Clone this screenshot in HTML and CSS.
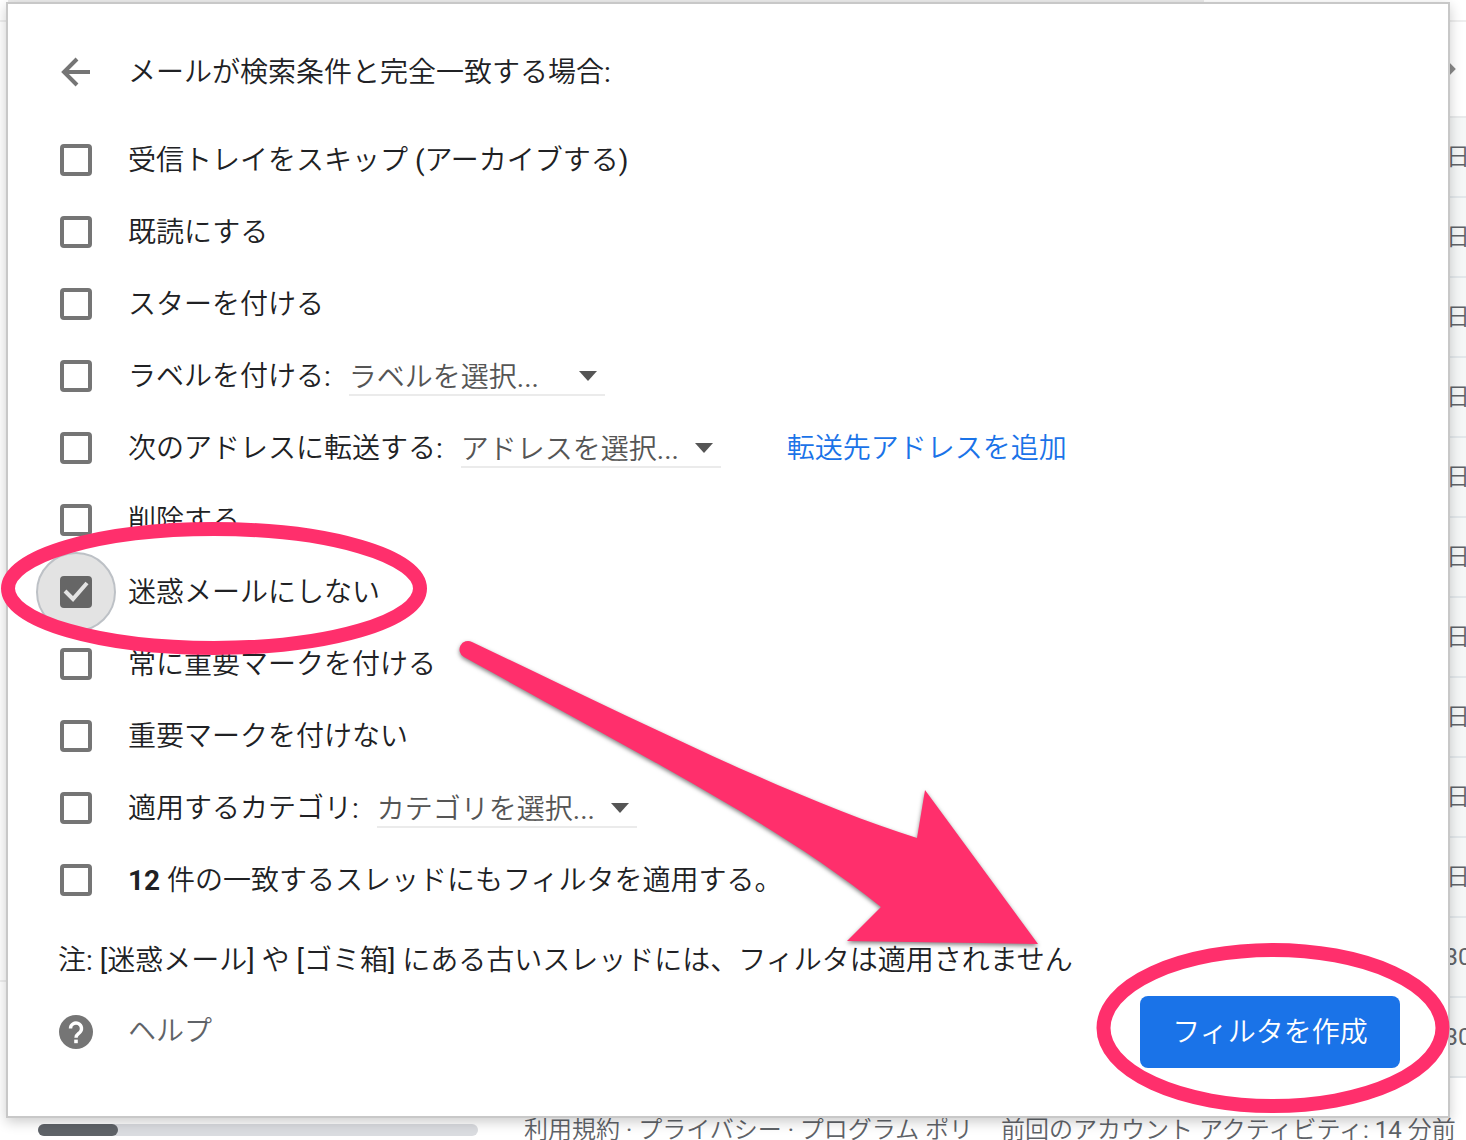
FILE: index.html
```html
<!DOCTYPE html>
<html lang="ja">
<head>
<meta charset="utf-8">
<title>フィルタを作成</title>
<link rel="stylesheet" href="styles.css">
</head>
<body>
<div class="page">
  <div class="search-edge"><div class="search-box"></div></div>
  <div class="toolbar">
    <svg class="chevron" viewBox="0 0 24 24" aria-hidden="true"><path d="M7 6l6 6-6 6" fill="none" stroke="#8a8a8a" stroke-width="4"/></svg>
  </div>
  <div class="mailbox">
    <div class="gutter"></div>
    <ul class="dates">
      <li>日</li><li>日</li><li>日</li><li>日</li><li>日</li><li>日</li>
      <li>日</li><li>日</li><li>日</li><li>日</li><li>30</li><li>30</li>
    </ul>
  </div>
  <footer class="footer">
    <div class="storage"><div class="storage-used"></div></div>
    <p class="policies">利用規約 · プライバシー · プログラム ポリ</p>
    <p class="activity">前回のアカウント アクティビティ: 14 分前</p>
  </footer>

  <form class="dialog">
    <header class="row head">
      <button class="icon-button" type="button" aria-label="戻る">
        <svg viewBox="0 0 32 32" aria-hidden="true"><path d="M30 16H5M17 3 4 16l13 13" fill="none" stroke="#757575" stroke-width="4"/></svg>
      </button>
      <h1>メールが検索条件と完全一致する場合:</h1>
    </header>
    <div class="options">
      <div class="row"><span class="tick"><input type="checkbox" id="skip"></span><label for="skip">受信トレイをスキップ (アーカイブする)</label></div>
      <div class="row"><span class="tick"><input type="checkbox" id="read"></span><label for="read">既読にする</label></div>
      <div class="row"><span class="tick"><input type="checkbox" id="star"></span><label for="star">スターを付ける</label></div>
      <div class="row"><span class="tick"><input type="checkbox" id="label"></span><label for="label">ラベルを付ける:</label>
        <span class="pick pick-narrow"><select aria-label="ラベル"><option>ラベルを選択...</option></select><svg viewBox="0 0 18 10" aria-hidden="true"><path d="M0 0h18L9 10z"/></svg></span></div>
      <div class="row"><span class="tick"><input type="checkbox" id="forward"></span><label for="forward">次のアドレスに転送する:</label>
        <span class="pick"><select aria-label="転送先アドレス"><option>アドレスを選択...</option></select><svg viewBox="0 0 18 10" aria-hidden="true"><path d="M0 0h18L9 10z"/></svg></span>
        <a class="add" href="#forwarding">転送先アドレスを追加</a></div>
      <div class="row"><span class="tick"><input type="checkbox" id="delete"></span><label for="delete">削除する</label></div>
      <div class="row"><span class="tick focused"><input type="checkbox" id="nospam" checked><svg viewBox="0 0 32 32" aria-hidden="true"><path d="M5 15l8 8L27 7" fill="none" stroke="#e3e3e3" stroke-width="4"/></svg></span><label for="nospam">迷惑メールにしない</label></div>
      <div class="row"><span class="tick"><input type="checkbox" id="important"></span><label for="important">常に重要マークを付ける</label></div>
      <div class="row"><span class="tick"><input type="checkbox" id="unimportant"></span><label for="unimportant">重要マークを付けない</label></div>
      <div class="row"><span class="tick"><input type="checkbox" id="category"></span><label for="category">適用するカテゴリ:</label>
        <span class="pick"><select aria-label="カテゴリ"><option>カテゴリを選択...</option></select><svg viewBox="0 0 18 10" aria-hidden="true"><path d="M0 0h18L9 10z"/></svg></span></div>
      <div class="row"><span class="tick"><input type="checkbox" id="apply"></span><label for="apply"><b>12</b> 件の一致するスレッドにもフィルタを適用する。</label></div>
    </div>
    <p class="note">注: [迷惑メール] や [ゴミ箱] にある古いスレッドには、フィルタは適用されません</p>
    <div class="actions">
      <a class="help" href="#help">
        <svg viewBox="0 0 34 34" aria-hidden="true"><circle cx="17" cy="17" r="17" fill="#757575"/><path d="M11.500 13.500a5.500 5.500 0 1 1 9 4.200c-2 1.600-3.500 2.300-3.500 5" fill="none" stroke="#fff" stroke-width="3.400"/><path d="M15.200 24.600h3.600v3.600h-3.600z" fill="#fff"/></svg>
        ヘルプ</a>
      <button class="create" type="submit">フィルタを作成</button>
    </div>
  </form>

  <svg class="marks marks-start" viewBox="0 0 1060 440" aria-hidden="true">
    <ellipse cx="214" cy="68.500" rx="206" ry="59.500" fill="none" stroke="#ff2f6c" stroke-width="14"/>
    <path class="arrow" d="M472 122C640 202 800 282 917 318L925 270 1038 424 847 421 881 387C780 306 650 240 464 137A8 8 0 0 1 472 122Z"/>
  </svg>
  <svg class="marks marks-end" viewBox="0 0 354 172" aria-hidden="true">
    <ellipse cx="177" cy="86" rx="169.500" ry="78" fill="none" stroke="#ff2f6c" stroke-width="14"/>
  </svg>
</div>
</body>
</html>
```
FILE: styles.css
```css
*, *::before { box-sizing: border-box; }

body {
  margin: 0;
  font-family: Roboto, "Noto Sans CJK JP DemiLight", "Noto Sans CJK JP Light", "Noto Sans CJK JP", sans-serif;
  font-size: 28px;
  line-height: 40px;
  color: #202124;
  background: #fff;
}

h1, p, ul { margin: 0; padding: 0; font: inherit; list-style: none; }

.page { position: relative; overflow: hidden; }

/* Inbox behind the dialog */
.search-edge { height: 22px; padding-left: 8px; border-bottom: 2px solid #efefef; }
.search-box { width: 82%; height: 4px; background: #ececec; }

.toolbar {
  display: flex;
  align-items: center;
  justify-content: flex-end;
  height: 94px;
}
.chevron { width: 24px; height: 24px; margin-right: 2px; }

.mailbox { display: flex; justify-content: space-between; }
.gutter { width: 24px; height: 866px; border-bottom: 2px solid #efefef; }

.dates { width: 16px; border-top: 2px solid #e9ebec; font-size: 24px; color: #5f6368; }
.dates li {
  display: flex;
  align-items: center;
  justify-content: center;
  height: 80px;
  border-bottom: 2px solid #e3e8eb;
  background: #f5f7f7;
}

.footer {
  display: flex;
  align-items: center;
  height: 62px;
  padding: 42px 0 0 38px;
  font-size: 24px;
  line-height: 24px;
  color: #5f6368;
  white-space: nowrap;
}
.storage { flex: none; width: 440px; height: 12px; margin-right: 46px; border-radius: 6px; background: #dadce0; }
.storage-used { width: 80px; height: 12px; border-radius: 6px; background: #5f6368; }
.activity { margin-left: 28px; }

/* Filter dialog */
.dialog {
  position: absolute;
  top: 2px;
  left: 6px;
  right: 16px;
  padding: 32px 48px 48px 50px;
  border: 2px solid #c8c8c8;
  background: #fff;
  box-shadow: 0 4px 12px rgba(0, 0, 0, 0.2);
}

.row { display: flex; align-items: center; height: 72px; padding-left: 2px; }
.row h1, .row label, .add { padding-top: 2px; }
.head { margin-bottom: 16px; }

.icon-button { width: 32px; height: 32px; margin-right: 36px; padding: 0; border: 0; background: none; }
.icon-button svg { display: block; width: 32px; height: 32px; }

/* A tick box with its check mark laid on top */
.tick { flex: none; display: grid; width: 32px; height: 32px; margin-right: 36px; }
.tick > * { grid-area: 1 / 1; width: 32px; height: 32px; }
.tick svg { z-index: 1; pointer-events: none; }
.tick input {
  appearance: none;
  margin: 0;
  border: 4px solid #757575;
  border-radius: 4px;
  background: #fff;
}
.tick input:checked { z-index: 1; border-color: #666; background: #666; }
.focused::before {
  content: "";
  grid-area: 1 / 1;
  width: 80px;
  height: 80px;
  margin: -24px;
  border: 2px solid #bdc1c6;
  border-radius: 50%;
  background: #e3e3e3;
}

.pick { display: grid; align-items: center; width: 260px; margin-left: 18px; }
.pick-narrow { width: 256px; }
.pick > * { grid-area: 1 / 1; }
.pick svg { justify-self: end; width: 18px; height: 10px; margin-right: 8px; fill: #555; pointer-events: none; }
.pick select {
  appearance: none;
  width: 100%;
  height: 40px;
  padding: 2px 0 0;
  border: 0;
  border-bottom: 2px solid #ebebeb;
  font: inherit;
  color: #555;
  background: none;
}
.add { margin-left: 66px; color: #1a73e8; text-decoration: none; }

.note { padding-top: 25px; }

.actions { display: flex; align-items: center; justify-content: space-between; margin-top: 15px; }
.help { display: flex; align-items: center; gap: 35px; padding-left: 1px; color: #5f6368; text-decoration: none; }
.help svg { width: 34px; height: 34px; }
.create {
  width: 260px;
  height: 72px;
  padding: 2px 0 0;
  border: 0;
  border-radius: 8px;
  font: inherit;
  color: #fff;
  background: #1a73e8;
}

/* Hand-drawn marks over the dialog */
.marks { position: absolute; z-index: 2; pointer-events: none; overflow: visible; }
.marks-start { top: 520px; left: 0; width: 1060px; height: 440px; }
.marks-end { top: 942px; right: 16px; width: 354px; height: 172px; }
.arrow { fill: #ff2f6c; filter: drop-shadow(0 2px 2px rgba(0, 0, 0, 0.5)); }
```
